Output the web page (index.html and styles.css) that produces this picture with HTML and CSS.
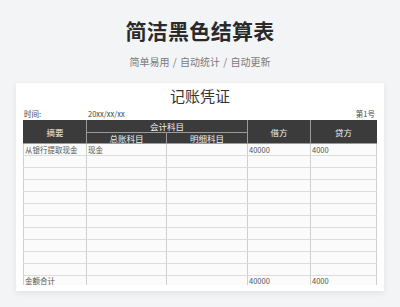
FILE: index.html
```html
<!DOCTYPE html>
<html lang="zh">
<head>
<meta charset="utf-8">
<link rel="stylesheet" href="styles.css">
</head>
<body>
<header class="hero">
  <h1 class="title">简洁黑色结算表</h1>
  <p class="subtitle">简单易用 / 自动统计 / 自动更新</p>
</header>
<section class="card">
  <h2 class="doc-title">记账凭证</h2>
  <div class="meta">
    <span class="meta-label">时间:</span>
    <span class="meta-date">20xx/xx/xx</span>
    <span class="meta-no">第1号</span>
  </div>
  <table class="voucher">
    <colgroup>
      <col class="c1"><col class="c2"><col class="c3"><col class="c4"><col class="c5">
    </colgroup>
    <thead>
      <tr class="h1">
        <th rowspan="2">摘要</th>
        <th colspan="2">会计科目</th>
        <th rowspan="2">借方</th>
        <th rowspan="2">贷方</th>
      </tr>
      <tr class="h2">
        <th>总账科目</th>
        <th>明细科目</th>
      </tr>
    </thead>
    <tbody>
      <tr><td>从银行提取现金</td><td>现金</td><td></td><td>40000</td><td>4000</td></tr>
      <tr><td></td><td></td><td></td><td></td><td></td></tr>
      <tr><td></td><td></td><td></td><td></td><td></td></tr>
      <tr><td></td><td></td><td></td><td></td><td></td></tr>
      <tr><td></td><td></td><td></td><td></td><td></td></tr>
      <tr><td></td><td></td><td></td><td></td><td></td></tr>
      <tr><td></td><td></td><td></td><td></td><td></td></tr>
      <tr><td></td><td></td><td></td><td></td><td></td></tr>
      <tr><td></td><td></td><td></td><td></td><td></td></tr>
      <tr><td></td><td></td><td></td><td></td><td></td></tr>
      <tr><td></td><td></td><td></td><td></td><td></td></tr>
      <tr class="sum"><td>金额合计</td><td></td><td></td><td>40000</td><td>4000</td></tr>
    </tbody>
  </table>
</section>
</body>
</html>
```
FILE: styles.css
```css
* { box-sizing: border-box; }
html, body { margin: 0; padding: 0; }
body {
  width: 400px;
  height: 307px;
  overflow: hidden;
  background: #f3f4f6;
  font-family: "Noto Sans CJK SC", "Noto Sans", sans-serif;
  color: #333;
}
.hero {
  display: flex;
  flex-direction: column;
  align-items: center;
  padding-top: 15px;
}
.title {
  margin: 0;
  font-size: 21px;
  line-height: 30px;
  font-weight: 700;
  color: #2a2a2a;
  letter-spacing: 0.3px;
}
.subtitle {
  margin: 0;
  margin-top: 10px;
  font-size: 10px;
  line-height: 14px;
  color: #7a7a7a;
  word-spacing: 1px;
}
.card {
  margin: 14px 16px 0 16px;
  background: #fff;
  box-shadow: 0 2px 6px rgba(0,0,0,0.08);
  padding: 0 7px 6px 7px;
  display: flex;
  flex-direction: column;
}
.doc-title {
  margin: 0;
  padding-top: 3px;
  text-align: center;
  font-size: 15px;
  line-height: 20px;
  font-weight: 400;
  color: #333;
}
.meta {
  display: flex;
  align-items: center;
  font-size: 7.5px;
  line-height: 11px;
  color: #444;
  padding: 2px 2px 2px 1px;
  height: 14px;
}
.meta-label { width: 64px; }
.meta-date { flex: 1; }
.voucher {
  width: 100%;
  border-collapse: collapse;
  table-layout: fixed;
  font-size: 7.5px;
  color: #555;
}
.c1 { width: 63px; }
.c2 { width: 80px; }
.c3 { width: 81px; }
.c4 { width: 63px; }
.c5 { width: auto; }
.voucher th {
  background: #3b3b3b;
  color: #f0f0f0;
  font-weight: 400;
  font-size: 8.5px;
  border: 1px solid #9a9a9a;
  padding: 0;
  text-align: center;
}
.voucher .h1 th { height: 12px; line-height: 11px; }
.voucher .h2 th { height: 11px; line-height: 10px; }
.voucher tr:first-child th { border-top-color: #3b3b3b; }
.voucher th:first-child { border-left-color: #3b3b3b; }
.voucher .h1 th:last-child { border-right-color: #3b3b3b; }
.voucher td {
  height: 12px;
  padding: 0 0 0 1px;
  line-height: 10px;
  border: 1px solid #dcdcdc;
  border-left-color: #cfcfcf;
  border-right-color: #cfcfcf;
  background: #fbfbfb;
  white-space: nowrap;
  overflow: hidden;
  vertical-align: middle;
}
.voucher .sum td {
  height: 9px;
  line-height: 9px;
  border-bottom: none;
  vertical-align: bottom;
}
```
